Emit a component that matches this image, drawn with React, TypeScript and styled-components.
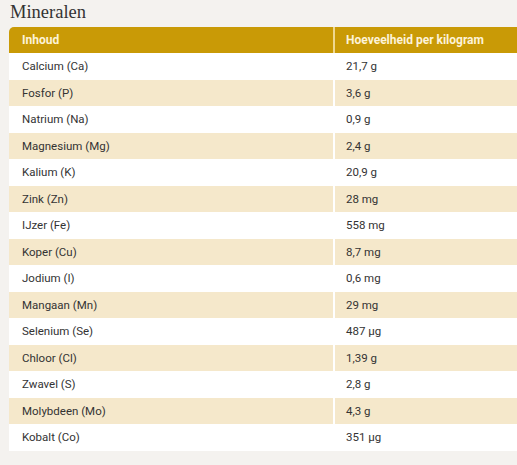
import styled, { createGlobalStyle } from 'styled-components';

const GlobalStyle = createGlobalStyle`
	html, body {
		margin: 0;
		background: #f4f2ef;
		overflow: hidden;
	}
	body {
		font-family: 'Roboto', 'Liberation Sans', sans-serif;
		color: #333;
	}
`;

const Page = styled.div`
	padding: 0 0 0 9px;
	width: 560px;
`;

const Title = styled.h2`
	margin: 0;
	padding: 2px 0 0 1px;
	font-family: 'Liberation Serif', 'DejaVu Serif', serif;
	font-weight: 400;
	font-size: 18.5px;
	line-height: 20px;
	color: #333;
	height: 25px;
`;

const Table = styled.table`
	width: 100%;
	border-collapse: collapse;
	border-spacing: 0;
	font-size: 11.5px;
`;

const HeadCell = styled.th`
	background: #c99a06;
	color: #fdf3d8;
	font-weight: 700;
	font-size: 12px;
	text-align: left;
	height: 26px;
	padding: 0 0 0 11px;
	&:first-child {
		border-top-left-radius: 5px;
		width: 311px;
		padding-left: 13px;
		border-right: 2px solid #efd890;
	}
`;

const Row = styled.tr<{ $striped: boolean }>`
	background: ${props => (props.$striped ? '#f5e8cb' : '#ffffff')};
`;

const Cell = styled.td`
	height: 26.5px;
	padding: 0 0 0 11px;
	&:first-child {
		padding-left: 13px;
		border-right: 2px solid #ffffff;
	}
`;

const minerals: [string, string][] = [
	['Calcium (Ca)', '21,7 g'],
	['Fosfor (P)', '3,6 g'],
	['Natrium (Na)', '0,9 g'],
	['Magnesium (Mg)', '2,4 g'],
	['Kalium (K)', '20,9 g'],
	['Zink (Zn)', '28 mg'],
	['IJzer (Fe)', '558 mg'],
	['Koper (Cu)', '8,7 mg'],
	['Jodium (I)', '0,6 mg'],
	['Mangaan (Mn)', '29 mg'],
	['Selenium (Se)', '487 µg'],
	['Chloor (Cl)', '1,39 g'],
	['Zwavel (S)', '2,8 g'],
	['Molybdeen (Mo)', '4,3 g'],
	['Kobalt (Co)', '351 µg'],
];

function App() {
	return (
		<Page>
			<GlobalStyle />
			<Title>Mineralen</Title>
			<Table>
				<thead>
					<tr>
						<HeadCell>Inhoud</HeadCell>
						<HeadCell>Hoeveelheid per kilogram</HeadCell>
					</tr>
				</thead>
				<tbody>
					{minerals.map(([name, amount], i) => (
						<Row key={name} $striped={i % 2 === 1}>
							<Cell>{name}</Cell>
							<Cell>{amount}</Cell>
						</Row>
					))}
				</tbody>
			</Table>
		</Page>
	);
}

export default App;
